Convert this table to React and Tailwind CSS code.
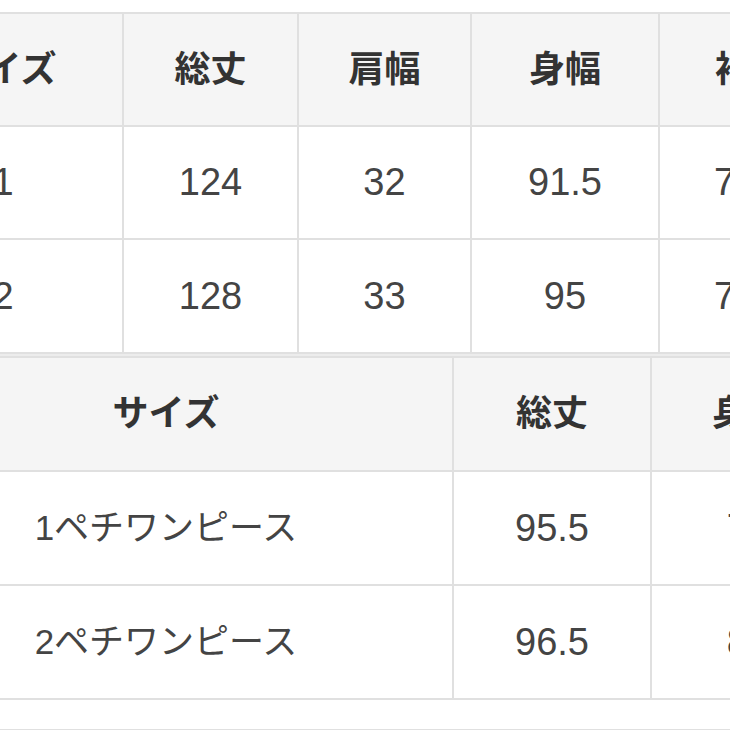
import React from "react";

const font = { fontFamily: '"Liberation Sans", "Noto Sans CJK JP", sans-serif' };

function Th({ children }) {
  return (
    <th className="border-2 border-[#e0e0e0] bg-[#f5f5f5] text-[36px] font-bold text-[#333] text-center align-middle p-0">
      {children}
    </th>
  );
}

function Td({ children, small }) {
  return (
    <td
      className={
        "border-2 border-[#e0e0e0] bg-white text-center align-middle p-0 font-normal text-[#444] " +
        (small ? "text-[35px]" : "text-[38px]")
      }
    >
      {children}
    </td>
  );
}

export default function App() {
  return (
    <div className="w-[730px] h-[730px] overflow-hidden bg-white pt-[12px]" style={font}>
      <table className="table-fixed border-collapse ml-[-118px] w-[960px]">
        <colgroup>
          <col className="w-[240px]" />
          <col className="w-[175px]" />
          <col className="w-[173px]" />
          <col className="w-[188px]" />
          <col className="w-[184px]" />
        </colgroup>
        <tbody>
          <tr className="h-[113px]">
            <Th>サイズ</Th>
            <Th>総丈</Th>
            <Th>肩幅</Th>
            <Th>身幅</Th>
            <Th>袖丈</Th>
          </tr>
          <tr className="h-[113px]">
            <Td>1</Td>
            <Td>124</Td>
            <Td>32</Td>
            <Td>91.5</Td>
            <Td>76.5</Td>
          </tr>
          <tr className="h-[114px]">
            <Td>2</Td>
            <Td>128</Td>
            <Td>33</Td>
            <Td>95</Td>
            <Td>77.5</Td>
          </tr>
        </tbody>
      </table>
      <div className="h-[2px] bg-[#ececec]" />
      <table className="table-fixed border-collapse ml-[-122px] w-[966px]">
        <colgroup>
          <col className="w-[574px]" />
          <col className="w-[198px]" />
          <col className="w-[194px]" />
        </colgroup>
        <tbody>
          <tr className="h-[114px]">
            <Th>サイズ</Th>
            <Th>総丈</Th>
            <Th>身幅</Th>
          </tr>
          <tr className="h-[114px]">
            <Td small>1ペチワンピース</Td>
            <Td>95.5</Td>
            <Td>78</Td>
          </tr>
          <tr className="h-[114px]">
            <Td small>2ペチワンピース</Td>
            <Td>96.5</Td>
            <Td>82</Td>
          </tr>
          <tr className="h-[31px]">
            <td className="border-y-2 border-x-0 border-[#e0e0e0] bg-white p-0" />
            <td className="border-y-2 border-x-0 border-[#e0e0e0] bg-white p-0" />
            <td className="border-y-2 border-x-0 border-[#e0e0e0] bg-white p-0" />
          </tr>
        </tbody>
      </table>
    </div>
  );
}
